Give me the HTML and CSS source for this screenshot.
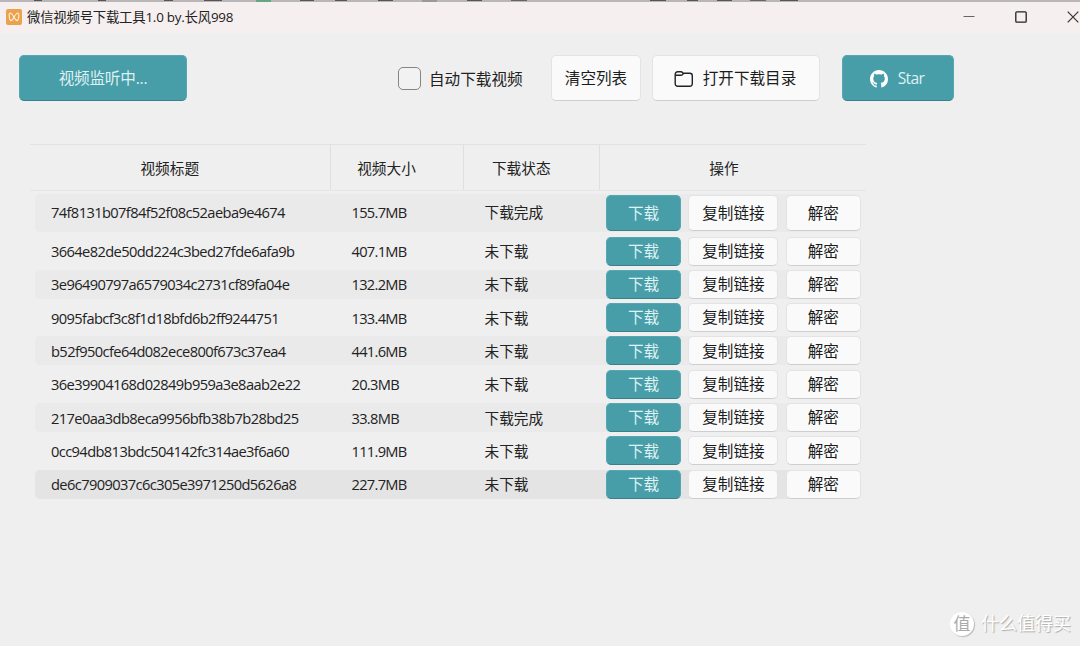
FILE: index.html
```
<!DOCTYPE html>
<html lang="zh-CN">
<head>
  <meta charset="UTF-8" />
  <meta name="viewport" content="width=device-width, initial-scale=1.0"/>
  <title>微信视频号下载工具1.0</title>
  <link rel="stylesheet" href="styles.css">
</head>
<body>
  <div class="desktop-edge"></div>

  <header class="titlebar">
    <svg class="app-icon" viewBox="0 0 16 16">
      <rect width="16" height="16" rx="2" fill="#eca24c"/>
      <path d="M8 8.200C7 6 5.300 3.900 3.900 4.200c-1.500.4-.5 7.200 1 7.400C6.200 11.700 7.300 9.600 8 8.200c.7 1.400 1.800 3.500 3.100 3.400 1.500-.2 2.500-7 1-7.400C10.700 3.900 9 6 8 8.200" fill="none" stroke="#fff0dc" stroke-width="1.100"/>
      <path d="M5 3.600h6L8 6.800z" fill="#eca24c"/>
    </svg>
    <span class="app-title">微信视频号下载工具1.0 by.长风998</span>
    <div class="window-controls">
      <svg width="12" height="12" viewBox="0 0 12 12"><path d="M.5 5.500h11" stroke="#666" fill="none"/></svg>
      <svg width="12" height="12" viewBox="0 0 12 12"><rect x=".8" y=".8" width="10.400" height="10.400" rx="1" stroke="#222" stroke-width="1.300" fill="none"/></svg>
      <svg width="12" height="12" viewBox="0 0 12 12"><path d="M.7.7l10.600 10.600M11.300.7L.7 11.300" stroke="#333" stroke-width="1.200" fill="none"/></svg>
    </div>
  </header>

  <div class="toolbar">
    <button class="btn primary listen-btn">视频监听中...</button>
    <label class="auto-download"><input type="checkbox"/>自动下载视频</label>
    <button class="btn clear-btn">清空列表</button>
    <button class="btn folder-btn">
      <svg width="20" height="18" viewBox="0 0 20 18" fill="none" stroke="#222" stroke-width="1.400">
        <path d="M1.200 4.200a2.500 2.500 0 0 1 2.500-2.500h3.200c.8 0 1.300.3 1.800.9l.5.600h6.600a2.500 2.500 0 0 1 2.500 2.500v8a2.500 2.500 0 0 1-2.500 2.500H3.700a2.500 2.500 0 0 1-2.500-2.500z"/>
        <path d="M1.400 5.300h5.400c.8 0 1.300-.3 1.800-.8l.9-1.200"/>
      </svg>
      打开下载目录
    </button>
    <button class="btn primary star-btn">
      <svg width="18" height="18" viewBox="0 0 16 16" fill="#fff">
        <path d="M8 0C3.580 0 0 3.580 0 8c0 3.540 2.290 6.530 5.470 7.590.4.070.55-.17.55-.38 0-.19-.01-.82-.01-1.490-2.010.37-2.530-.49-2.690-.94-.09-.23-.48-.94-.82-1.130-.28-.15-.68-.52-.01-.53.63-.01 1.080.58 1.230.82.72 1.210 1.870.87 2.330.66.070-.52.28-.87.51-1.070-1.780-.2-3.640-.89-3.640-3.950 0-.87.31-1.590.82-2.150-.08-.2-.36-1.020.08-2.120 0 0 .67-.21 2.200.82.64-.18 1.320-.27 2-.27s1.360.09 2 .27c1.530-1.040 2.200-.82 2.200-.82.44 1.100.16 1.920.08 2.120.51.56.82 1.270.82 2.150 0 3.070-1.870 3.750-3.650 3.950.29.25.54.73.54 1.480 0 1.070-.01 1.930-.01 2.200 0 .21.15.46.55.38A8.010 8.010 0 0 0 16 8c0-4.420-3.580-8-8-8z"/>
      </svg>
      Star
    </button>
  </div>

  <main class="video-table">
    <div class="table-head">
      <div>视频标题</div>
      <div>视频大小</div>
      <div>下载状态</div>
      <div>操作</div>
    </div>
    <div class="row tall striped">
      <span>74f8131b07f84f52f08c52aeba9e4674</span><span>155.7MB</span><span>下载完成</span>
      <div class="actions"><button class="btn primary">下载</button><button class="btn">复制链接</button><button class="btn">解密</button></div>
    </div>
    <div class="row">
      <span>3664e82de50dd224c3bed27fde6afa9b</span><span>407.1MB</span><span>未下载</span>
      <div class="actions"><button class="btn primary">下载</button><button class="btn">复制链接</button><button class="btn">解密</button></div>
    </div>
    <div class="row striped">
      <span>3e96490797a6579034c2731cf89fa04e</span><span>132.2MB</span><span>未下载</span>
      <div class="actions"><button class="btn primary">下载</button><button class="btn">复制链接</button><button class="btn">解密</button></div>
    </div>
    <div class="row">
      <span>9095fabcf3c8f1d18bfd6b2ff9244751</span><span>133.4MB</span><span>未下载</span>
      <div class="actions"><button class="btn primary">下载</button><button class="btn">复制链接</button><button class="btn">解密</button></div>
    </div>
    <div class="row striped">
      <span>b52f950cfe64d082ece800f673c37ea4</span><span>441.6MB</span><span>未下载</span>
      <div class="actions"><button class="btn primary">下载</button><button class="btn">复制链接</button><button class="btn">解密</button></div>
    </div>
    <div class="row">
      <span>36e39904168d02849b959a3e8aab2e22</span><span>20.3MB</span><span>未下载</span>
      <div class="actions"><button class="btn primary">下载</button><button class="btn">复制链接</button><button class="btn">解密</button></div>
    </div>
    <div class="row striped">
      <span>217e0aa3db8eca9956bfb38b7b28bd25</span><span>33.8MB</span><span>下载完成</span>
      <div class="actions"><button class="btn primary">下载</button><button class="btn">复制链接</button><button class="btn">解密</button></div>
    </div>
    <div class="row">
      <span>0cc94db813bdc504142fc314ae3f6a60</span><span>111.9MB</span><span>未下载</span>
      <div class="actions"><button class="btn primary">下载</button><button class="btn">复制链接</button><button class="btn">解密</button></div>
    </div>
    <div class="row selected">
      <span>de6c7909037c6c305e3971250d5626a8</span><span>227.7MB</span><span>未下载</span>
      <div class="actions"><button class="btn primary">下载</button><button class="btn">复制链接</button><button class="btn">解密</button></div>
    </div>
  </main>

  <div class="watermark"><span class="watermark-logo">值</span>什么值得买</div>
</body>
</html>
```
FILE: styles.css
```
* {
  box-sizing: border-box;
}

body {
  margin: 0;
  height: 646px;
  background-color: #efefef;
  color: #222;
  font-family: "Open Sans", "Noto Sans CJK SC", sans-serif;
  font-size: 14.67px;
  overflow: hidden;
}

/* 窗口上方露出的桌面 */
.desktop-edge {
  height: 2px;
  background:
    linear-gradient(#555, #555) 34px 0 / 8px 1px no-repeat,
    linear-gradient(#555, #555) 98px 0 / 8px 1px no-repeat,
    linear-gradient(#555, #555) 164px 0 / 9px 1px no-repeat,
    linear-gradient(#555, #555) 204px 0 / 18px 1px no-repeat,
    linear-gradient(#68a383, #68a383) 256px 0 / 15px 2px no-repeat,
    linear-gradient(#555, #555) 300px 0 / 14px 1px no-repeat,
    linear-gradient(#555, #555) 335px 0 / 12px 1px no-repeat,
    linear-gradient(#555, #555) 378px 0 / 15px 1px no-repeat,
    linear-gradient(#999, #999) 422px 0 / 15px 2px no-repeat,
    linear-gradient(#555, #555) 467px 0 / 15px 1px no-repeat,
    linear-gradient(#666, #666) 511px 0 / 16px 1px no-repeat,
    linear-gradient(#555, #555) 650px 0 / 16px 1px no-repeat,
    linear-gradient(#555, #555) 687px 0 / 11px 1px no-repeat,
    linear-gradient(#555, #555) 717px 0 / 15px 1px no-repeat,
    linear-gradient(#666, #666) 750px 0 / 16px 1px no-repeat,
    linear-gradient(#555, #555) 780px 0 / 18px 1px no-repeat,
    #b8b6b6;
}

.titlebar {
  display: flex;
  align-items: center;
  height: 31px;
  padding: 0 1px 2px 6px;
  background-color: #f5efef;
}

.app-icon {
  width: 16px;
  height: 16px;
}

.app-title {
  margin-left: 5px;
  padding-bottom: 2px;
  font-size: 13.4px;
  letter-spacing: -0.23px;
}

.window-controls {
  display: flex;
  gap: 40px;
  margin-left: auto;
}

.btn {
  display: flex;
  align-items: center;
  justify-content: center;
  height: 29px;
  padding: 1px 0 0;
  border: 1px solid #e3e3e3;
  border-bottom-color: #cecece;
  border-radius: 5px;
  background-color: #fafafa;
  color: #1c1c1c;
  font: inherit;
  font-size: 15.6px;
  line-height: 1;
}

.btn.primary {
  border-color: #55a8b2;
  border-bottom-color: #398089;
  background-color: #479da8;
  color: #dff1f3;
}

.toolbar {
  display: flex;
  align-items: center;
  height: 46px;
  margin: 22px 0 0 19px;
}

.toolbar .btn {
  height: 46px;
  padding-top: 2px;
}

.listen-btn {
  width: 168px;
  letter-spacing: -0.2px;
}

.auto-download {
  display: flex;
  align-items: center;
  width: 154px;
  margin-left: 211px;
  font-size: 15.6px;
}

.auto-download input {
  appearance: none;
  width: 23px;
  height: 23px;
  margin: 0 8px 0 0;
  border: 1px solid #858585;
  border-radius: 5px;
  background-color: #f2f2f2;
}

.toolbar .clear-btn {
  width: 90px;
  margin-left: -1px;
}

.folder-btn {
  width: 168px;
  margin-left: 11px;
  gap: 9px;
}

.toolbar .folder-btn {
  padding-right: 2px;
}

.star-btn {
  width: 112px;
  margin-left: 22px;
  gap: 10px;
  letter-spacing: -0.6px;
}

.toolbar .star-btn {
  padding-right: 2px;
}

.video-table {
  width: 836px;
  margin: 43px 0 0 30px;
}

.table-head,
.row {
  display: grid;
  grid-template-columns: 300.5px 133px 136.5px 1fr;
}

.table-head {
  height: 47px;
  margin-bottom: 3px;
  border-top: 1px solid #e2e2e2;
  border-bottom: 1px solid #e6e6e6;
}

.table-head div {
  display: flex;
  align-items: center;
  justify-content: center;
  padding-right: 20px;
  padding-bottom: 1px;
  border-right: 1px solid #e0e0e0;
}

.table-head div:last-child {
  padding-right: 18px;
  border-right: none;
}

.row {
  grid-template-columns: 300.5px 133px 121.5px 1fr;
  align-items: center;
  height: 29px;
  margin: 0 5px 4.3px;
  padding-left: 16px;
  border-radius: 5px;
}

.row.tall {
  height: 38px;
  margin-bottom: 4.6px;
}

.row.tall .btn {
  height: 36px;
}

.row.tall span {
  padding-bottom: 2px;
}

.row.striped {
  background-color: #eaeaea;
}

.row.selected {
  background-color: #e4e4e4;
}

.row span {
  font-size: 14.67px;
  white-space: nowrap;
}

.row span:first-child {
  letter-spacing: -0.61px;
}

.row span:nth-child(2) {
  letter-spacing: -0.7px;
}

.row span:nth-child(3) {
  padding-bottom: 1px;
}

.row.tall span:nth-child(3) {
  padding-bottom: 3px;
}

.actions {
  display: grid;
  grid-template-columns: 75px 90px 75px;
  gap: 7.4px;
}

/* 右下角水印 */
.watermark {
  position: absolute;
  right: 9px;
  bottom: 9px;
  display: flex;
  align-items: center;
  gap: 7px;
  color: #fff;
  font-size: 18px;
  line-height: 27px;
  text-shadow: 1px 1px 1px #aaa;
}

.watermark-logo {
  width: 24px;
  height: 24px;
  border-radius: 50%;
  background-color: #fff;
  box-shadow: 1px 1px 1px #bbb;
  color: #aaa;
  font-size: 17px;
  line-height: 23px;
  text-align: center;
  text-shadow: none;
}
```
